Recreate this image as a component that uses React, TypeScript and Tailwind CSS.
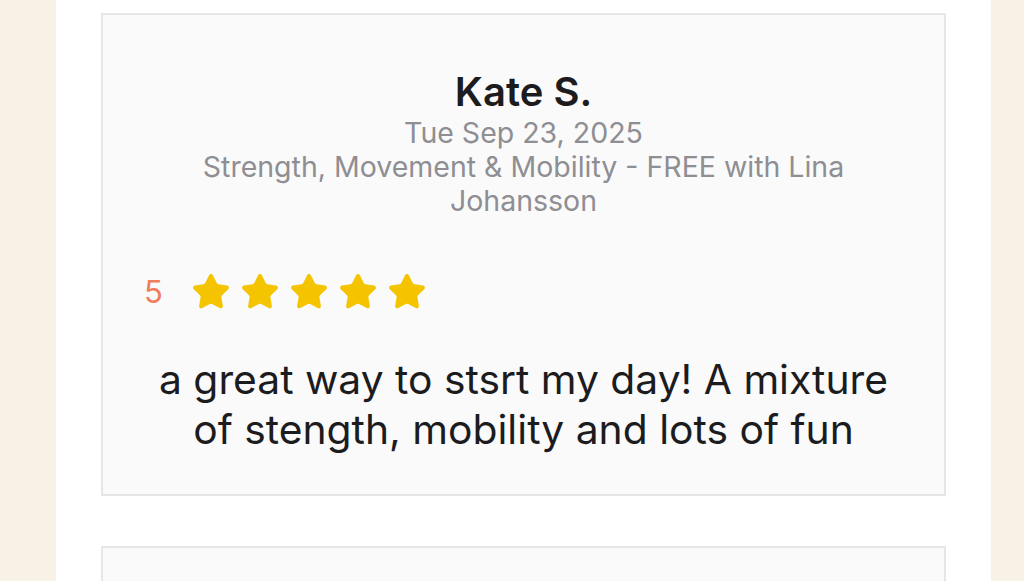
import { Star } from 'lucide-react';

function Stars({ count }: { count: number }) {
  return (
    <div className="flex items-center gap-[9px]">
      {Array.from({ length: count }).map((_, i) => (
        <Star key={i} size={40} fill="#f5c400" stroke="#f5c400" strokeWidth={1.5} strokeLinejoin="round" />
      ))}
    </div>
  );
}

export default function App() {
  return (
    <div className="h-[581px] overflow-hidden bg-[#f8f1e6] font-['Inter',sans-serif]">
      <div className="ml-[56px] w-[935px] h-full bg-white px-[45px] pt-[13px] flex flex-col gap-[50px]">
        <div className="shrink-0 border-2 border-[#e6e6e6] bg-[#fafafa] h-[483px] flex flex-col items-center pt-[54px] px-[40px]">
          <h2 className="text-[40px] leading-[46px] font-semibold text-[#1c1c1e]">Kate S.</h2>
          <div className="mt-[1px] text-[28.5px] leading-[34px] text-[#8e8e93] text-center">Tue Sep 23, 2025</div>
          <div className="text-[28.5px] leading-[34px] text-[#8e8e93] text-center max-w-[700px]">
            Strength, Movement &amp; Mobility - FREE with Lina Johansson
          </div>
          <div className="self-stretch flex items-center gap-[28px] mt-[54px] pl-[1px]">
            <span className="text-[31px] leading-[40px] text-[#f07d5c]">5</span>
            <Stars count={5} />
          </div>
          <p className="mt-[42px] text-[40.8px] leading-[50px] text-[#1c1c1e] text-center max-w-[760px]">
            a great way to stsrt my day! A mixture of stength, mobility and lots of fun
          </p>
        </div>
        <div className="shrink-0 border-2 border-[#e6e6e6] bg-[#fafafa] h-[300px]" />
      </div>
    </div>
  );
}
